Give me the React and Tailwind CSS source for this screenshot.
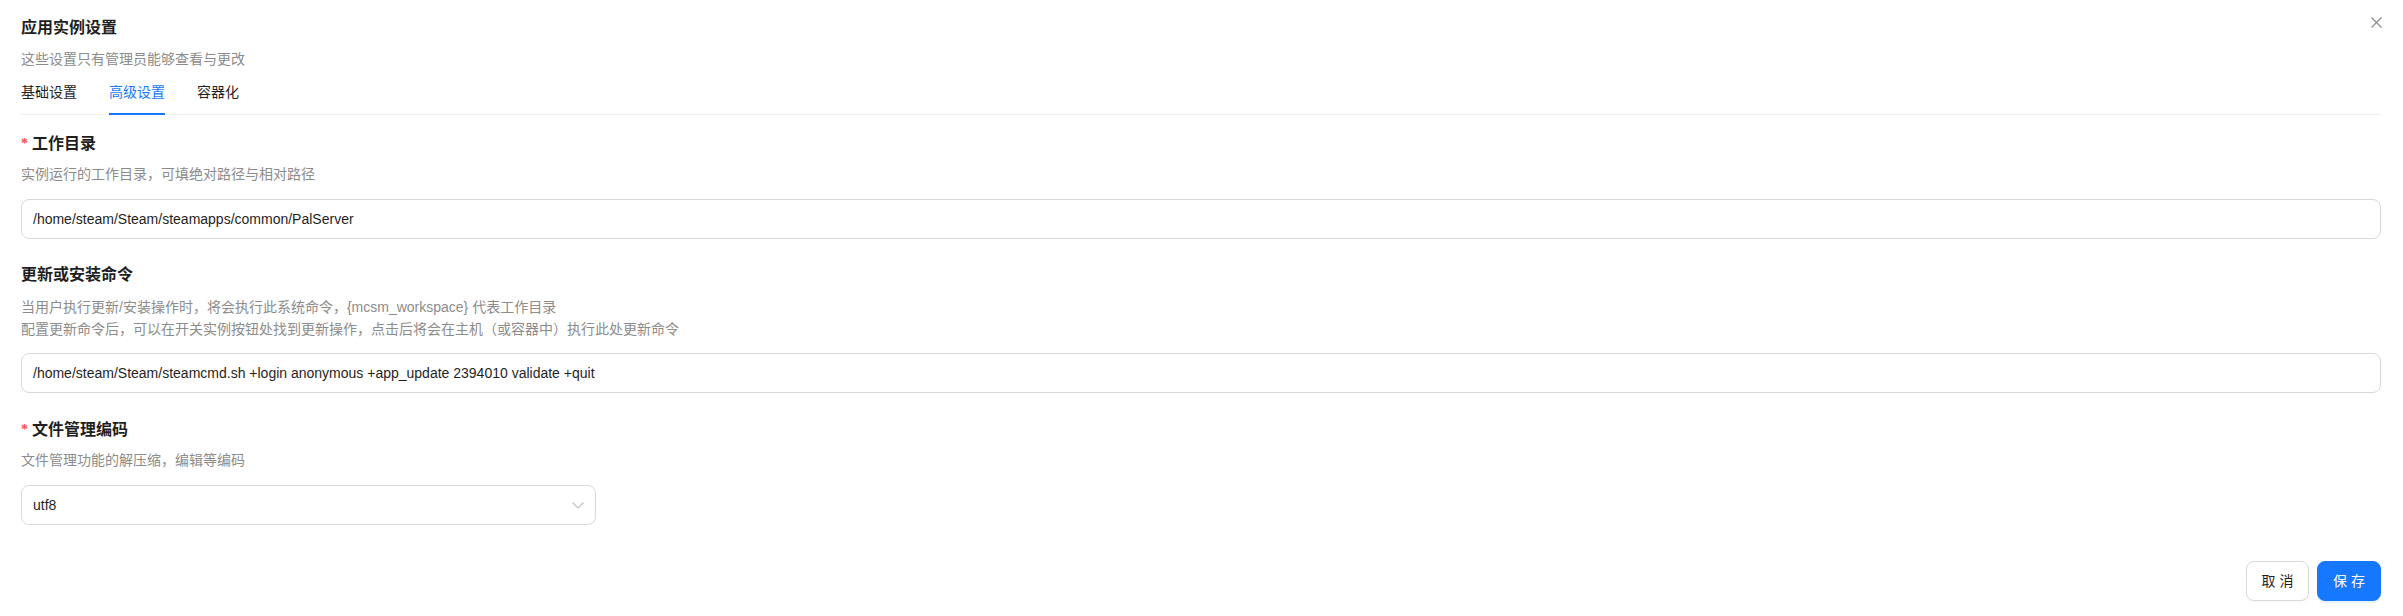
import React, { useState } from "react";

const tabs = ["基础设置", "高级设置", "容器化"];

const Label = ({ required, children }) => (
  <div className="flex items-center text-[16px] font-bold leading-[24px] text-[#1f1f1f]">
    {required && (
      <span className="mr-[4px] font-['Liberation_Serif'] text-[14px] leading-none text-[#ff4d4f]">
        *
      </span>
    )}
    {children}
  </div>
);

const Desc = ({ className = "", children }) => (
  <div className={`text-[14px] leading-[22px] text-[#8c8c8c] ${className}`}>{children}</div>
);

const TextInput = ({ value, className = "" }) => (
  <input
    type="text"
    defaultValue={value}
    className={`block h-[40px] w-full rounded-[8px] border border-[#d9d9d9] bg-white px-[11px] text-[14px] text-[#1f1f1f] outline-none ${className}`}
  />
);

const App = () => {
  const [active, setActive] = useState(1);

  return (
    <div className="relative min-h-screen bg-white pb-[15px] pl-[21px] pr-[22px] pt-[16px] font-['Liberation_Sans','Noto_Sans_CJK_SC',sans-serif]">
      <button className="absolute right-[21px] top-[17px] text-[#8c8c8c]" aria-label="close">
        <svg width="11" height="11" viewBox="0 0 11 11" fill="none">
          <path d="M0.5 0.5L10.5 10.5M10.5 0.5L0.5 10.5" stroke="currentColor" strokeWidth="1.2" />
        </svg>
      </button>

      <h2 className="text-[16px] font-bold leading-[24px] text-[#1f1f1f]">应用实例设置</h2>
      <p className="mt-[8px] text-[14px] leading-[22px] text-[#8c8c8c]">这些设置只有管理员能够查看与更改</p>

      <div className="mt-[11px] flex gap-8 border-b border-[#f0f0f0]">
        {tabs.map((t, i) => (
          <button
            key={t}
            onClick={() => setActive(i)}
            className={`relative pb-[11px] text-[14px] leading-[22px] ${
              active === i ? "text-[#1677ff]" : "text-[#1f1f1f]"
            }`}
          >
            {t}
            {active === i && <span className="absolute bottom-[-1px] left-0 right-0 h-[2px] bg-[#1677ff]" />}
          </button>
        ))}
      </div>

      <div className="mt-[17px]">
        <Label required>工作目录</Label>
        <Desc className="mt-[7px]">实例运行的工作目录，可填绝对路径与相对路径</Desc>
        <TextInput className="mt-[14px]" value="/home/steam/Steam/steamapps/common/PalServer" />
      </div>

      <div className="mt-[24px]">
        <Label>更新或安装命令</Label>
        <Desc className="mt-[9px]">
          <div>当用户执行更新/安装操作时，将会执行此系统命令，{"{mcsm_workspace}"} 代表工作目录</div>
          <div>配置更新命令后，可以在开关实例按钮处找到更新操作，点击后将会在主机（或容器中）执行此处更新命令</div>
        </Desc>
        <TextInput
          className="mt-[13px]"
          value="/home/steam/Steam/steamcmd.sh +login anonymous +app_update 2394010 validate +quit"
        />
      </div>

      <div className="mt-[25px]">
        <Label required>文件管理编码</Label>
        <Desc className="mt-[7px]">文件管理功能的解压缩，编辑等编码</Desc>
        <div className="mt-[14px] flex h-[40px] w-[575px] items-center justify-between rounded-[8px] border border-[#d9d9d9] bg-white pl-[11px] pr-[11px]">
          <span className="text-[14px] text-[#1f1f1f]">utf8</span>
          <svg width="12" height="7" viewBox="0 0 12 7" fill="none">
            <path d="M0.5 0.5L6 6L11.5 0.5" stroke="#bfbfbf" strokeWidth="1.1" />
          </svg>
        </div>
      </div>

      <div className="mt-[36px] flex justify-end gap-2">
        <button className="h-[40px] w-[63px] whitespace-nowrap rounded-[8px] border border-[#d9d9d9] bg-white text-[14px] text-[#1f1f1f] shadow-[0_2px_0_rgba(0,0,0,0.02)]">
          取 消
        </button>
        <button className="h-[40px] w-[64px] whitespace-nowrap rounded-[8px] border border-[#1677ff] bg-[#1677ff] text-[14px] text-white shadow-[0_2px_0_rgba(5,145,255,0.1)]">
          保 存
        </button>
      </div>
    </div>
  );
};

export default App;
